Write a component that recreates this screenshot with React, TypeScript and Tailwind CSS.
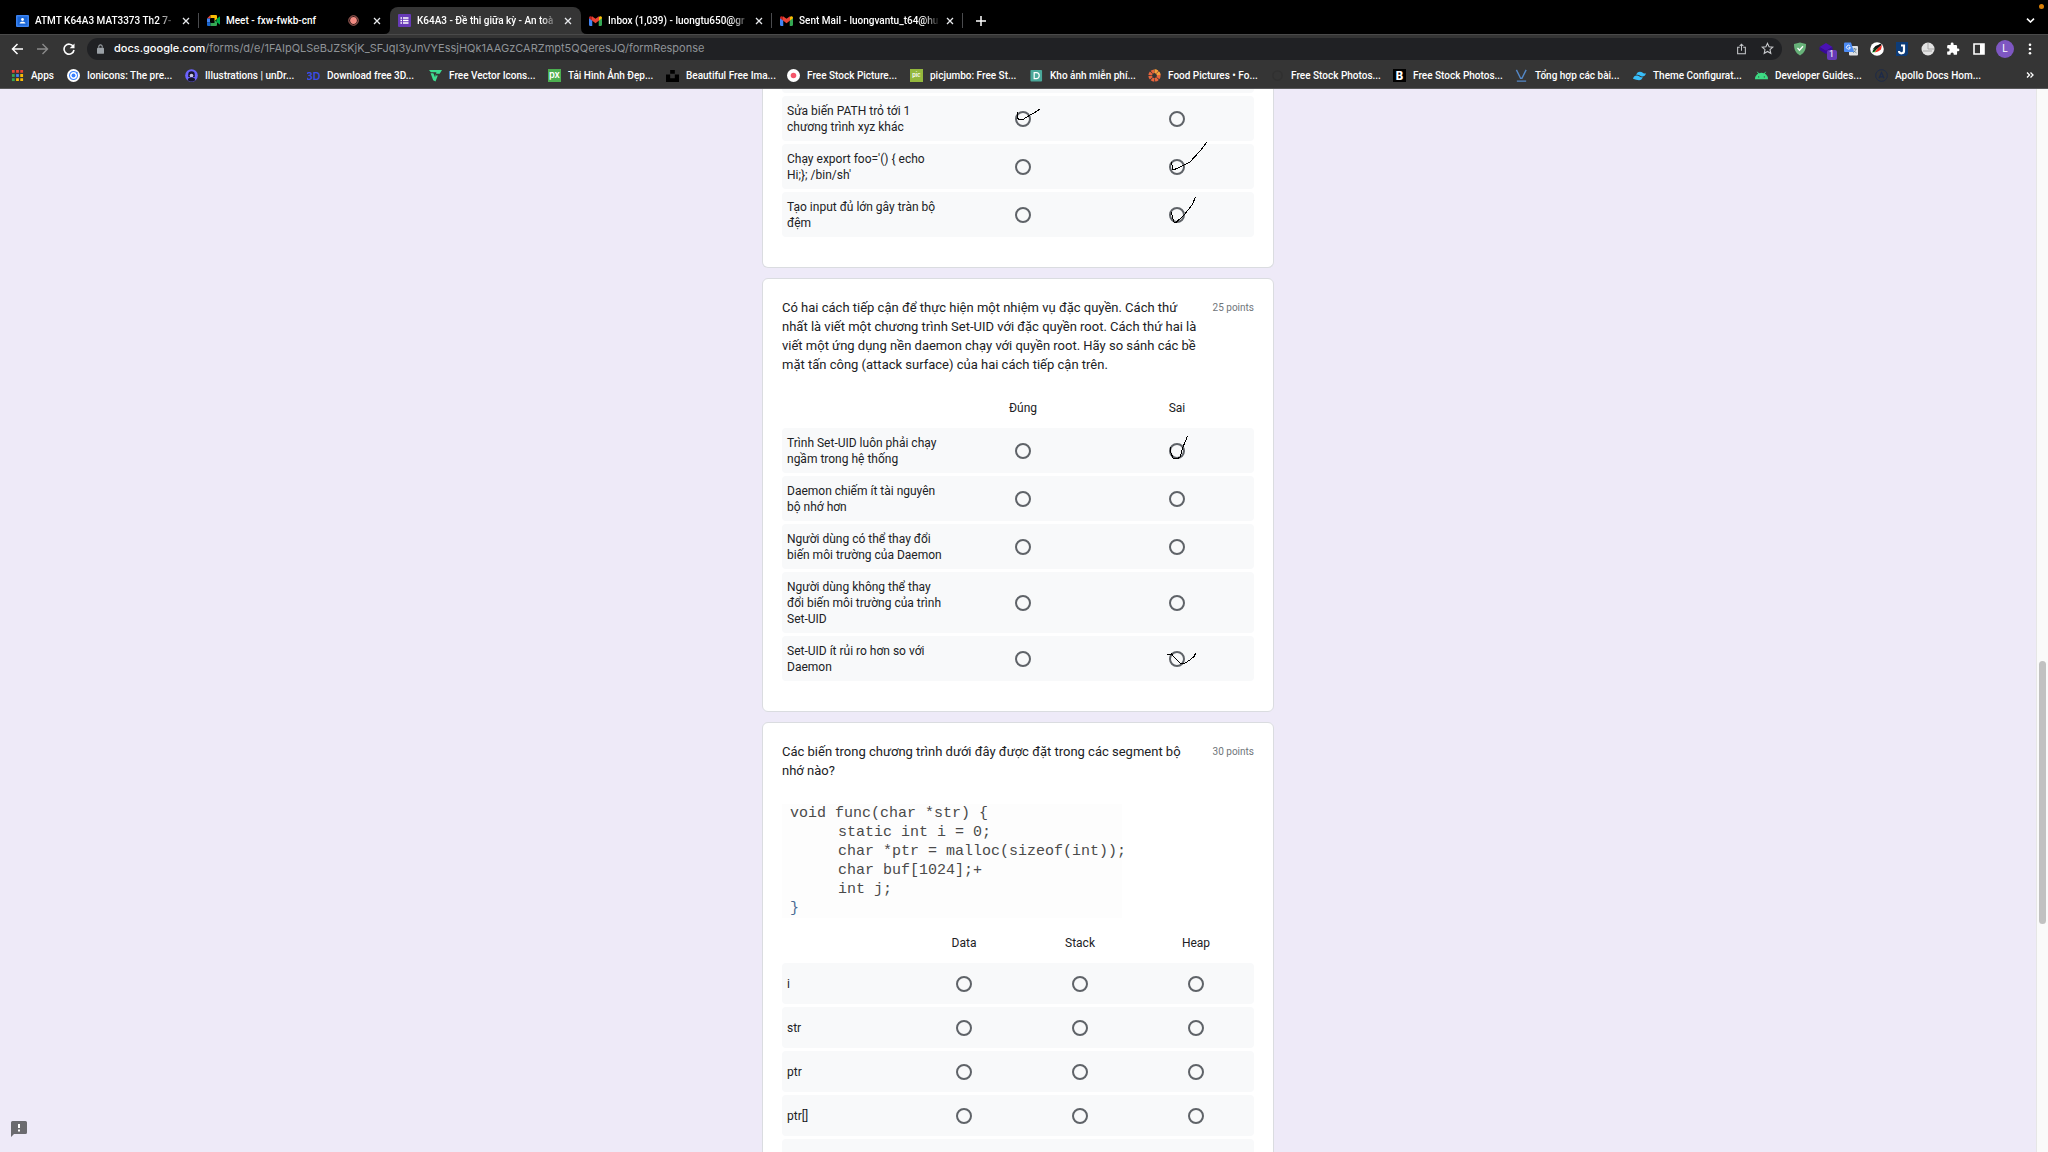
import type { ReactNode } from "react";

type Point = [number, number];

function Close() {
  return (
    <svg viewBox="0 0 8 8" className="size-2" stroke="#e8eaed" strokeWidth="1.3">
      <path d="M1 1 7 7M7 1 1 7" />
    </svg>
  );
}

function Gmail() {
  return (
    <svg viewBox="0 0 24 18" className="h-[10px] w-[13px]">
      <path fill="#4285f4" d="M0 3v13c0 1.2.7 2 2 2h4V7z" />
      <path fill="#34a853" d="M24 3v13c0 1.2-.7 2-2 2h-4V7z" />
      <path fill="#ea4335" d="M5.500 0 12 5l6.500-5v8L12 13 5.500 8z" />
      <path fill="#c5221f" d="M0 3C0 .3 3-1 5.500 1v7L0 4z" />
      <path fill="#fbbc04" d="M24 3c0-2.700-3-4-5.500-2v7L24 4z" />
    </svg>
  );
}

const classroomIcon = (
  <svg viewBox="0 0 13 12" className="h-3 w-[13px]">
    <rect width="13" height="12" rx="1" fill="#3b82f0" />
    <rect x="1.500" y="1.500" width="10" height="9" fill="#1a66d6" />
    <circle cx="6.500" cy="4.500" r="1.400" fill="#fff" />
    <path d="M3.500 8.500c0-2.500 6-2.500 6 0z" fill="#fff" />
  </svg>
);

const meetIcon = (
  <svg viewBox="0 0 13 11" className="h-[11px] w-[13px]">
    <path fill="#ea4335" d="M0 3.500 3.500 0v3.500z" />
    <path fill="#fbbc04" d="M3.500 0H9q1 0 1 1v3L7.500 6V3h-4z" />
    <path fill="#4285f4" d="M0 3.500h3v4H0z" />
    <path fill="#1967d2" d="M0 7.500h3.500V11H1q-1 0-1-1z" />
    <path fill="#34a853" d="M3.500 8h4V5l2.500 2v3q0 1-1 1H3.500z" />
    <path fill="#00ac47" d="M9.500 4 13 1.200v8.600L9.500 7z" />
  </svg>
);

const formsIcon = (
  <svg viewBox="0 0 13 13" className="size-[13px]">
    <rect width="13" height="13" rx="1" fill="#673ab7" />
    <path d="M5 4h5.500M5 6.500h5.500M5 9h5.500" stroke="#fff" strokeWidth="1.400" />
    <path d="M2.500 4H4M2.500 6.500H4M2.500 9H4" stroke="#fff" strokeWidth="1.400" />
  </svg>
);

const recordingDot = (
  <svg viewBox="0 0 11 11" className="mr-[8px] size-[11px] shrink-0">
    <circle cx="5.500" cy="5.500" r="4.700" fill="none" stroke="#f28b82" strokeWidth=".8" />
    <circle cx="5.500" cy="5.500" r="3.400" fill="#f28b82" />
  </svg>
);

type TabInfo = { title: string; icon: ReactNode; active?: boolean; recording?: boolean; divider?: boolean; fade?: boolean };

const tabs: TabInfo[] = [
  { title: "ATMT K64A3 MAT3373 Th2 7-", icon: classroomIcon, divider: true, fade: true },
  { title: "Meet - fxw-fwkb-cnf", icon: meetIcon, recording: true },
  { title: "K64A3 - Đề thi giữa kỳ - An toà", icon: formsIcon, active: true, fade: true },
  { title: "Inbox (1,039) - luongtu650@gr", icon: <Gmail />, divider: true, fade: true },
  { title: "Sent Mail - luongvantu_t64@hu", icon: <Gmail />, divider: true, fade: true },
];

function TabStrip() {
  return (
    <div className="flex h-[34px] items-end bg-black pl-2 text-[10px] font-medium text-white">
      {tabs.map((tab) => (
        <div
          key={tab.title}
          className={`relative flex h-[27px] w-[191px] shrink-0 items-center pr-[8px] pl-[8px] ${tab.active ? "rounded-t-lg bg-[#353535]" : ""}`}
        >
          {tab.active && (
            <svg viewBox="0 0 203 6" className="absolute bottom-0 -left-[6px] h-[6px] w-[203px]" fill="#353535">
              <path d="M0 6Q6 6 6 0v6zM203 6Q197 6 197 0v6z" />
            </svg>
          )}
          <span className="flex w-[13px] shrink-0">{tab.icon}</span>
          <span
            className={`ml-[6px] min-w-0 flex-1 overflow-hidden whitespace-nowrap ${tab.fade ? "[mask-image:linear-gradient(to_right,black_88%,transparent)]" : ""}`}
          >
            {tab.title}
          </span>
          {tab.recording && recordingDot}
          <button aria-label={`Close ${tab.title}`} className="ml-[5px] flex shrink-0 p-px">
            <Close />
          </button>
          {tab.divider && <span className="absolute top-[6px] right-0 h-[15px] w-px bg-[#4a4b4e]" />}
        </div>
      ))}
      <button aria-label="New tab" className="mb-2 ml-[13px]">
        <svg viewBox="0 0 10 10" className="size-[10px]" stroke="#fff" strokeWidth="1.500">
          <path d="M5 0v10M0 5h10" />
        </svg>
      </button>
      <span className="grow" />
      <div className="flex h-full flex-col items-end pt-1 pr-1">
        <span className="size-[5px] rounded-full bg-[#d97f06]" />
        <button aria-label="Search tabs" className="mt-[9px] mr-[9px]">
          <svg viewBox="0 0 9 5" className="h-[5px] w-[9px]" fill="none" stroke="#fff" strokeWidth="1.600">
            <path d="M1 .6 4.500 4 8 .6" />
          </svg>
        </button>
      </div>
    </div>
  );
}

const extensions: { name: string; icon: ReactNode }[] = [
  {
    name: "AdGuard",
    icon: (
      <svg viewBox="0 0 14 14" className="size-[14px]">
        <path d="M7 .5 13 2c0 5-1 8.500-6 11.500C2 10.500 1 7 1 2z" fill="#67b279" />
        <path d="m4.500 6 2 2.200 3.500-4" fill="none" stroke="#fff" strokeWidth="1.300" />
      </svg>
    ),
  },
  {
    name: "Layers, 1 notification",
    icon: (
      <span className="relative flex">
        <svg viewBox="0 0 14 14" className="size-[14px]">
          <path d="M7 1 13.500 5 7 9 .5 5z" fill="#4a12b5" />
          <path d="M.5 5 7 9l6.500-4v3L7 12 .5 8z" fill="#38089c" />
        </svg>
        <span className="absolute top-[8px] left-[8px] flex h-[10px] w-[10px] items-center justify-center rounded-[2px] bg-[#673ab7] text-[9px] leading-none text-white">
          1
        </span>
      </span>
    ),
  },
  {
    name: "Google Translate",
    icon: (
      <svg viewBox="0 0 14 14" className="size-[14px]">
        <rect x="5" y="4" width="9" height="9.500" rx="1" fill="#dfe1e5" />
        <path d="M8.500 7h4M10.500 6v1M12 7c-.5 2-2 3-3 4M9.500 8.500 12.500 11" stroke="#607d8b" strokeWidth=".8" fill="none" />
        <path d="M1 .5h6L10 10H1q-1 0-1-1V1.500q0-1 1-1z" fill="#4c8bf5" />
        <path d="M6 4.200A1.900 1.900 0 1 0 6.300 5.600H4.600" fill="none" stroke="#fff" strokeWidth=".9" />
      </svg>
    ),
  },
  {
    name: "Colour picker",
    icon: (
      <svg viewBox="0 0 14 14" className="size-[14px]">
        <circle cx="7" cy="7" r="6.800" fill="#fff" />
        <path d="M2.500 7.500 5.500 4 11 1.800 11.500 3 7 7z" fill="#111" />
        <path d="M2 10.500 4 7 8.500 4.500 5 10z" fill="#11c93a" />
        <path d="M4.500 10.500 8 6 12 3 11 7.500 8 9.500z" fill="#ee2b1f" />
        <path d="M3 9.500 10.500 2.500" stroke="#111" strokeWidth="1.400" />
      </svg>
    ),
  },
  {
    name: "J dictionary",
    icon: (
      <svg viewBox="0 0 14 14" className="size-[14px]">
        <path d="M1 0h12v12l-2 2H1z" fill="#0d3c78" />
        <path d="M6 3.500h3v5a2.300 2.300 0 0 1-5 .5" fill="none" stroke="#fff" strokeWidth="2.200" />
      </svg>
    ),
  },
  {
    name: "Analytics",
    icon: (
      <svg viewBox="0 0 14 14" className="size-[14px]">
        <circle cx="7" cy="7" r="6.500" fill="#e3e3e3" />
        <path d="M7 1v6h6M2 9h9" stroke="#a9a9a9" strokeWidth="1" fill="none" />
      </svg>
    ),
  },
  {
    name: "Extensions",
    icon: (
      <svg viewBox="0 0 24 24" className="size-[14px]" fill="#fff">
        <path d="M20.500 11H19V7a2 2 0 0 0-2-2h-4V3.500a2.500 2.500 0 0 0-5 0V5H4a2 2 0 0 0-2 2v3.800h1.500a2.700 2.700 0 0 1 0 5.400H2V20a2 2 0 0 0 2 2h3.800v-1.500a2.700 2.700 0 0 1 5.400 0V22H17a2 2 0 0 0 2-2v-4h1.500a2.500 2.500 0 0 0 0-5z" />
      </svg>
    ),
  },
  {
    name: "Side panel",
    icon: (
      <svg viewBox="0 0 14 14" className="size-[14px]">
        <path d="M2 2h10v10H2z" fill="none" stroke="#fff" strokeWidth="1.600" />
        <path d="M8 2h4v10H8z" fill="#fff" />
      </svg>
    ),
  },
];

function Toolbar() {
  return (
    <div className="flex h-[28px] items-center border-t border-[#4a4a4a] bg-[#353535] pr-[16px] pl-[11px]">
      <button aria-label="Back">
        <svg viewBox="0 0 12 12" className="size-3" fill="none" stroke="#fff" strokeWidth="1.500">
          <path d="M12 6H1.500M6.500 1 1.500 6l5 5" />
        </svg>
      </button>
      <button aria-label="Forward" className="ml-[14px]">
        <svg viewBox="0 0 12 12" className="size-3" fill="none" stroke="#8a8a8a" strokeWidth="1.400">
          <path d="M0 6h10.500M5.500 1l5 5-5 5" />
        </svg>
      </button>
      <button aria-label="Reload" className="ml-[14px]">
        <svg viewBox="0 0 12 12" className="size-3" fill="none" stroke="#fff" strokeWidth="1.600">
          <path d="M10.300 3.500A5 5 0 1 0 11 7" />
          <path d="M11.500.5v4.800H6.700z" fill="#fff" stroke="none" />
        </svg>
      </button>
      <div className="ml-[12px] flex h-[22px] grow items-center rounded-full bg-[#202124] pr-[8px] pl-[10px]">
        <svg viewBox="0 0 8 11" className="h-[10px] w-[7px]">
          <rect y="4" width="8" height="7" rx="1" fill="#9aa0a6" />
          <path d="M2 4V2.800a2 2 0 0 1 4 0V4" fill="none" stroke="#9aa0a6" strokeWidth="1.200" />
        </svg>
        <div className="relative ml-[10px] flex h-full grow items-center font-[Inter,sans-serif] text-[11px]">
          <p className="whitespace-nowrap text-[#8f9397]">
            <span className="font-medium text-white">docs.google.com</span>
            /forms/d/e/1FAIpQLSeBJZSKjK_SFJqI3yJnVYEssjHQk1AAGzCARZmpt5QQeresJQ/formResponse
          </p>
          <input aria-label="Address and search bar" className="absolute inset-0 bg-transparent outline-none" />
        </div>
        <button aria-label="Share this page">
          <svg viewBox="0 0 12 14" className="h-3 w-[11px]" fill="none" stroke="#c8cacd" strokeWidth="1.200">
            <path d="M4 5H1.500v7.500h9V5H8M6 9V1.500M3.800 3.500 6 1.300l2.200 2.200" />
          </svg>
        </button>
        <button aria-label="Bookmark this page" className="ml-[14px]">
          <svg viewBox="0 0 24 24" className="size-[13px]" fill="none" stroke="#c8cacd" strokeWidth="2">
            <path d="m12 2.500 2.900 6.300 6.800.7-5.100 4.600 1.500 6.800-6.100-3.500-6.100 3.500 1.500-6.800-5.100-4.600 6.800-.7z" />
          </svg>
        </button>
      </div>
      <div className="ml-[11px] flex w-[193px] justify-between">
        {extensions.map((extension) => (
          <button key={extension.name} aria-label={extension.name} className="flex size-[14px] justify-center">
            {extension.icon}
          </button>
        ))}
      </div>
      <button
        aria-label="Profile"
        className="ml-[10px] flex size-[18px] items-center justify-center rounded-full bg-[#7e57c2] text-[10px] text-white"
      >
        L
      </button>
      <button aria-label="Menu" className="ml-[14px]">
        <svg viewBox="0 0 4 12" className="h-3 w-1" fill="#fff">
          <circle cx="2" cy="1.800" r="1.300" />
          <circle cx="2" cy="6" r="1.300" />
          <circle cx="2" cy="10.200" r="1.300" />
        </svg>
      </button>
    </div>
  );
}

type Bookmark = { label: string; width: string; icon: ReactNode };

const bookmarks: Bookmark[] = [
  {
    label: "Apps",
    width: "w-[56px]",
    icon: (
      <g>
        <path d="M1 1h3v3H1zM5.500 1h3v3h-3zM10 1h3v3h-3z" fill="#ea4335" />
        <path d="M1 5.500h3v3H1z" fill="#34a853" />
        <path d="M5.500 5.500h3v3h-3z" fill="#4285f4" />
        <path d="M10 5.500h3v3h-3zM5.500 10h3v3h-3zM10 10h3v3h-3z" fill="#fbbc04" />
        <path d="M1 10h3v3H1z" fill="#34a853" />
      </g>
    ),
  },
  {
    label: "Ionicons: The pre...",
    width: "w-[118px]",
    icon: (
      <g>
        <circle cx="7" cy="7" r="7" fill="#fff" />
        <circle cx="7" cy="7" r="4.300" fill="none" stroke="#3880ff" strokeWidth="1.100" />
        <circle cx="7" cy="7" r="2.100" fill="#3880ff" />
        <circle cx="10.500" cy="4" r="1" fill="#3880ff" />
      </g>
    ),
  },
  {
    label: "Illustrations | unDr...",
    width: "w-[122px]",
    icon: (
      <g>
        <circle cx="7" cy="7" r="6.800" fill="#6c63ff" />
        <path d="M3.500 6a3.500 3.500 0 0 1 7 0v2.500H3.500z" fill="#17152f" />
        <circle cx="7" cy="7" r="2" fill="#c9c5e8" />
        <path d="M3 12c0-4 8-4 8 0-2 2-6 2-8 0z" fill="#17152f" />
      </g>
    ),
  },
  {
    label: "Download free 3D...",
    width: "w-[122px]",
    icon: (
      <text x="-1" y="11.500" fontSize="11.500" fontWeight="600" fill="#3b4dea" fontFamily="Inter">
        3D
      </text>
    ),
  },
  {
    label: "Free Vector Icons...",
    width: "w-[119px]",
    icon: <path d="M0 1h14l-2.500 4H7.500l-1 2h3L7 13.500 4.500 12 1.700 4.500h3L6.500 9 8 3.500H2z" fill="#3ddc91" />,
  },
  {
    label: "Tải Hình Ảnh Đẹp...",
    width: "w-[118px]",
    icon: (
      <g>
        <rect width="14" height="14" fill="#4caf50" />
        <text x="1" y="10" fontSize="10" fontWeight="600" fill="#fff" fontFamily="Inter">
          px
        </text>
      </g>
    ),
  },
  {
    label: "Beautiful Free Ima...",
    width: "w-[121px]",
    icon: <path d="M4.500 1h5v4h-5zM0 6h4.500v4h5V6H14v8H0z" fill="#000" />,
  },
  {
    label: "Free Stock Picture...",
    width: "w-[123px]",
    icon: (
      <g>
        <circle cx="7" cy="7" r="7" fill="#fff" />
        <circle cx="7" cy="7" r="3" fill="#f4566a" />
      </g>
    ),
  },
  {
    label: "picjumbo: Free St...",
    width: "w-[120px]",
    icon: (
      <g>
        <rect width="14" height="14" fill="#94b83d" />
        <text x="2.500" y="9" fontSize="6" fontWeight="600" fill="#fff" fontFamily="Inter">
          pic
        </text>
      </g>
    ),
  },
  {
    label: "Kho ảnh miễn phí...",
    width: "w-[118px]",
    icon: (
      <g>
        <rect x=".5" y="1" width="12.500" height="12.500" rx="1" fill="#4aa89a" />
        <path d="M4.500 4h2.300a3 3 0 0 1 0 6.300H4.500z" fill="none" stroke="#fff" strokeWidth="1.300" />
      </g>
    ),
  },
  {
    label: "Food Pictures • Fo...",
    width: "w-[123px]",
    icon: (
      <g fill="none" strokeWidth="4">
        <circle cx="7" cy="7" r="4.600" stroke="#e8643c" strokeDasharray="2.900 .7" />
        <path d="M7 2.400A4.600 4.600 0 0 1 11.600 7" stroke="#f2a33a" strokeDasharray="2.900 .7" />
      </g>
    ),
  },
  {
    label: "Free Stock Photos...",
    width: "w-[122px]",
    icon: <circle cx="7" cy="7" r="5" fill="none" stroke="#303030" strokeWidth="1.500" />,
  },
  {
    label: "Free Stock Photos...",
    width: "w-[122px]",
    icon: (
      <g>
        <rect width="14" height="14" fill="#000" />
        <text x="3" y="11.500" fontSize="12" fontWeight="800" fill="#fff" fontFamily="Inter">
          B
        </text>
      </g>
    ),
  },
  {
    label: "Tổng hợp các bài...",
    width: "w-[118px]",
    icon: <path d="M1.500 1 6 10h1.500L12 1M2 13h10" fill="none" stroke="#5488c7" strokeWidth="1.500" />,
  },
  {
    label: "Theme Configurat...",
    width: "w-[122px]",
    icon: (
      <path
        d="M3.500 6.500Q4.400 3 7.500 3c3 0 3 2.600 6.500 1.500Q13 8 10 8C7 8 7 5.400 3.500 6.500zM0 10.500Q1 7 4 7c3 0 3 2.600 6.500 1.500Q9.500 12 6.500 12 3.500 12 0 10.500z"
        fill="#38bdf8"
      />
    ),
  },
  {
    label: "Developer Guides...",
    width: "w-[120px]",
    icon: (
      <g>
        <path d="M0 11a7 7 0 0 1 14 0z" fill="#3ddc84" />
        <path d="M2.500 3 4.500 6M11.500 3 9.500 6" stroke="#3ddc84" strokeWidth="1" />
        <circle cx="4" cy="8.500" r=".6" fill="#353535" />
        <circle cx="10" cy="8.500" r=".6" fill="#353535" />
      </g>
    ),
  },
  {
    label: "Apollo Docs Hom...",
    width: "w-[122px]",
    icon: (
      <g fill="none" stroke="#1c2a4a">
        <circle cx="7" cy="7" r="6.300" strokeWidth="1" />
        <path d="M4.300 10 7 3.800 9.700 10M5.500 8.500h3" strokeWidth="1.300" />
      </g>
    ),
  },
];

function BookmarkBar() {
  return (
    <nav
      aria-label="Bookmarks"
      className="flex h-[27px] items-center border-b border-[#58585a] bg-[#353535] pr-[14px] pl-[11px] text-[10px] font-medium text-white"
    >
      {bookmarks.map((bookmark, index) => (
        <a key={index} href="#" className={`flex shrink-0 items-center gap-[7px] whitespace-nowrap ${bookmark.width}`}>
          <svg viewBox="0 0 14 14" className="size-[13px] shrink-0">
            {bookmark.icon}
          </svg>
          {bookmark.label}
        </a>
      ))}
      <button aria-label="More bookmarks" className="ml-auto">
        <svg viewBox="0 0 8 6" className="h-[6px] w-2" fill="none" stroke="#fff" strokeWidth="1.300">
          <path d="m1 .5 2.500 2.500L1 5.500M4.500.5 7 3 4.500 5.500" />
        </svg>
      </button>
    </nav>
  );
}

function Ink({ points }: { points: Point[] }) {
  return (
    <svg
      viewBox="-32 -32 64 64"
      className="pointer-events-none absolute -top-6 -left-6 size-16"
      fill="none"
      stroke="#000"
      strokeWidth="1"
      strokeLinejoin="round"
      shapeRendering="crispEdges"
    >
      <polyline points={points.map((p) => p.join(",")).join(" ")} />
    </svg>
  );
}

type Row = { label: string; ink?: Record<number, Point[]> };

function ChoiceGrid({
  name,
  columns,
  rows,
  columnClass,
  rowClass,
  showHeader = true,
  className = "",
}: {
  name: string;
  columns: string[];
  rows: Row[];
  columnClass: string;
  rowClass: string;
  showHeader?: boolean;
  className?: string;
}) {
  return (
    <table className={`w-full table-fixed border-separate border-spacing-x-0 border-spacing-y-[3px] text-[12px] leading-4 ${className}`}>
      <colgroup>
        <col />
        {columns.map((column) => (
          <col key={column} className={columnClass} />
        ))}
      </colgroup>
      {showHeader && (
        <thead>
          <tr>
            <td />
            {columns.map((column) => (
              <th key={column} scope="col" className="h-[34px] p-0 text-center font-normal">
                {column}
              </th>
            ))}
          </tr>
        </thead>
      )}
      <tbody>
        {rows.map((row, index) => (
          <tr key={index} className="bg-[#f8f9fa]">
            <th scope="row" className={`rounded-l-sm pr-0 pl-[5px] text-left font-normal ${rowClass}`}>
              {row.label}
            </th>
            {columns.map((column, c) => (
              <td key={column} className="p-0 last:rounded-r-sm">
                <div className="relative mx-auto size-4">
                  <input
                    type="radio"
                    name={`${name}-${index}`}
                    aria-label={`${row.label}: ${column}`}
                    className="block size-4 appearance-none rounded-full border-2 border-[#5f6368]"
                  />
                  {row.ink?.[c] && <Ink points={row.ink[c]} />}
                </div>
              </td>
            ))}
          </tr>
        ))}
      </tbody>
    </table>
  );
}

const answers = ["Đúng", "Sai"];

const attackRows: Row[] = [
  {
    label: "Sửa biến PATH trỏ tới 1 chương trình xyz khác",
    ink: { 0: [[-6, -7], [-6, -2], [-4, 1], [0, 0.5], [7, -4], [11, -6], [17, -10]] },
  },
  {
    label: "Chạy export foo='() { echo Hi;}; /bin/sh'",
    ink: { 1: [[-5.5, -5], [-4, 3], [1, 1], [7, -2], [13, -5], [23, -16], [30, -25]] },
  },
  {
    label: "Tạo input đủ lớn gây tràn bộ đệm",
    ink: { 1: [[-6, -3], [-3, 7], [-1, 7.5], [7.5, -0.5], [15, -10], [18.5, -18]] },
  },
];

const daemonRows: Row[] = [
  {
    label: "Trình Set-UID luôn phải chạy ngầm trong hệ thống",
    ink: { 1: [[-6.5, -4], [-6, 2], [-4, 7], [0, 8], [3, 6], [6, -4], [10.5, -15]] },
  },
  { label: "Daemon chiếm ít tài nguyên bộ nhớ hơn" },
  { label: "Người dùng có thể thay đổi biến môi trường của Daemon" },
  { label: "Người dùng không thể thay đổi biến môi trường của trình Set-UID" },
  {
    label: "Set-UID ít rủi ro hơn so với Daemon",
    ink: { 1: [[-9.5, -4.5], [-5.5, -5], [-3, -2], [4, 5], [8, 4], [13, 1], [17.5, -3], [18.5, -6]] },
  },
];

const segmentRows: Row[] = [{ label: "i" }, { label: "str" }, { label: "ptr" }, { label: "ptr[]" }];

function Question({ title, points, children }: { title: string; points: string; children: ReactNode }) {
  return (
    <section className="mt-[10px] rounded-md border border-[#dadce0] bg-white px-[19px] pt-[19px] pb-[27px]">
      <div className="flex items-start justify-between">
        <h2 className="w-[420px] text-[13px] leading-[19px]">{title}</h2>
        <span className="text-[10px] leading-[20px] text-[#70757a]">{points}</span>
      </div>
      {children}
    </section>
  );
}

export default function App() {
  return (
    <div className="flex h-screen flex-col overflow-hidden font-[Roboto,sans-serif]">
      <header>
        <TabStrip />
        <Toolbar />
        <BookmarkBar />
      </header>
      <div className="relative flex min-h-0 grow bg-[#eeeaf8]">
        <main className="h-full grow overflow-hidden text-[#202124]">
          <div className="mx-auto w-[512px]">
            <section className="rounded-b-md border border-t-0 border-[#dadce0] bg-white px-[19px] pb-[27px]">
              <div className="h-1 rounded-b-sm bg-[#f8f9fa]" />
              <ChoiceGrid
                name="attack"
                columns={answers}
                rows={attackRows}
                columnClass="w-[154px]"
                rowClass="pt-[7px] pb-[6px]"
                showHeader={false}
              />
            </section>
            <Question
              title="Có hai cách tiếp cận để thực hiện một nhiệm vụ đặc quyền. Cách thứ nhất là viết một chương trình Set-UID với đặc quyền root. Cách thứ hai là viết một ứng dụng nền daemon chạy với quyền root. Hãy so sánh các bề mặt tấn công (attack surface) của hai cách tiếp cận trên."
              points="25 points"
            >
              <ChoiceGrid
                name="daemon"
                columns={answers}
                rows={daemonRows}
                columnClass="w-[154px]"
                rowClass="pt-[7px] pb-[6px]"
                className="mt-[14px]"
              />
            </Question>
            <Question title="Các biến trong chương trình dưới đây được đặt trong các segment bộ nhớ nào?" points="30 points">
              <pre className="mt-6 w-[340px] bg-[#fdfdfd] pl-2 font-['Liberation_Mono',monospace] text-[15px] leading-[19px] text-[#4a4a4a]">
                <code className="block">{"void func(char *str) {"}</code>
                <code className="block pl-12">{"static int i = 0;\nchar *ptr = malloc(sizeof(int));\nchar buf[1024];+\nint j;"}</code>
                <code className="block text-[#4a6a94]">{"}"}</code>
              </pre>
              <ChoiceGrid
                name="segment"
                columns={["Data", "Stack", "Heap"]}
                rows={segmentRows}
                columnClass="w-[116px]"
                rowClass="h-[41px] py-0"
                className="mt-[5px]"
              />
              <div className="h-[41px] rounded-sm bg-[#f8f9fa]" />
            </Question>
          </div>
        </main>
        <div className="flex w-3 shrink-0 flex-col items-center border-l border-[#e6e6e6] bg-[#fafafa]">
          <div className="grow-[572]" />
          <div className="w-[7px] grow-[263] rounded-full bg-[#c1c1c1]" />
          <div className="grow-[228]" />
        </div>
        <button aria-label="Report a problem" className="absolute bottom-[15px] left-[11px]">
          <svg viewBox="0 0 16 16" className="size-4">
            <path d="M1.500 0H14.500Q16 0 16 1.500V11.500Q16 13 14.500 13H3L0 16V1.500Q0 0 1.500 0z" fill="#6b6b6f" />
            <path d="M7 3h2v4H7zM7 8.500h2v2H7z" fill="#fff" />
          </svg>
        </button>
      </div>
    </div>
  );
}
